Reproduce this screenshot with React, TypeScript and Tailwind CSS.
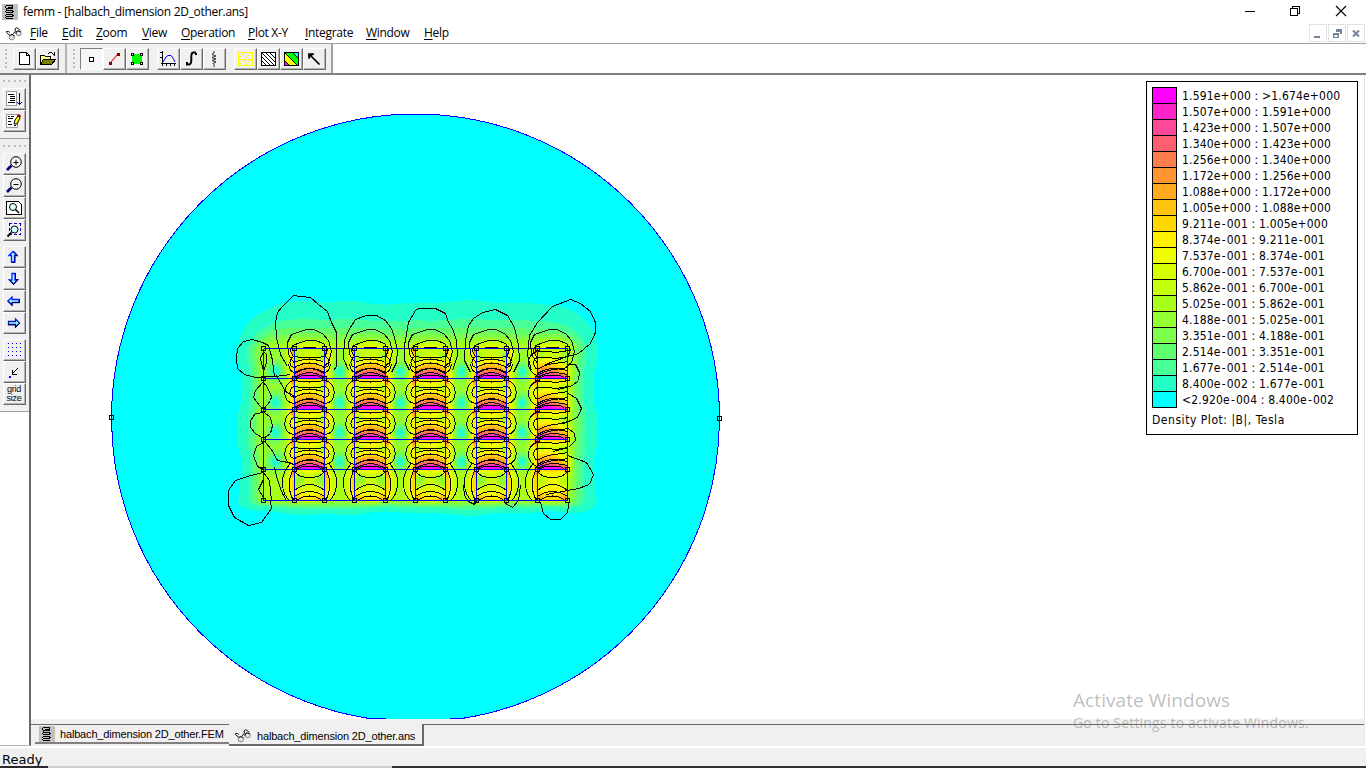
import React from 'react';

const LEVELS = [
  '#00ffff', '#24ffc8', '#48ff98', '#60ff70', '#7cff4c', '#94ff30', '#a8ff1c', '#c4ff0c', '#d8ff00', '#f0ff00',
  '#fff000', '#ffd800', '#ffc410', '#ffa820', '#ff9430', '#ff7c4c', '#ff6070', '#ff4898', '#ff24c8', '#ff00ff',
];

const LEGEND = [
  '1.591e+000 : >1.674e+000', '1.507e+000 : 1.591e+000', '1.423e+000 : 1.507e+000', '1.340e+000 : 1.423e+000',
  '1.256e+000 : 1.340e+000', '1.172e+000 : 1.256e+000', '1.088e+000 : 1.172e+000', '1.005e+000 : 1.088e+000',
  '9.211e-001 : 1.005e+000', '8.374e-001 : 9.211e-001', '7.537e-001 : 8.374e-001', '6.700e-001 : 7.537e-001',
  '5.862e-001 : 6.700e-001', '5.025e-001 : 5.862e-001', '4.188e-001 : 5.025e-001', '3.351e-001 : 4.188e-001',
  '2.514e-001 : 3.351e-001', '1.677e-001 : 2.514e-001', '8.400e-002 : 1.677e-001', '<2.920e-004 : 8.400e-002',
];

const XS = [263, 294, 324, 354, 385, 415, 445, 476, 506, 537, 567];
const YS = [348, 378, 409, 439, 469, 500];
const MAGNETS = [309, 370, 430, 491, 552];

const clamp = (v: number, a: number, b: number) => Math.max(a, Math.min(b, v));
const bump = (dx: number, dy: number, rx: number, ry: number) => Math.exp(-((dx / rx) ** 2) - (dy / ry) ** 2);

/** Flux density band (0..19) at a point of the plot. */
function level(x: number, y: number) {
  const wob = 2 * Math.sin(y / 13) + Math.sin(y / 5) * 0.7;
  const inset = 24 * clamp((348 - y) / 28, 0, 1) + 8 * clamp((y - 496) / 10, 0, 1);
  const left = 263 + inset;
  const right = 567 - inset;
  const ox = x < left ? (left - x) / (24 + wob + inset) : x > right ? (x - right) / (28 + wob + inset) : 0;
  const wave = Math.sin(x / 9) * 0.8 + 1.5 * Math.sin(x / 23);
  const oy = y < 348 ? (348 - y) / (46 + wave) : y > 500 ? (y - 500) / (13 + wave) : 0;
  const u = Math.hypot(ox, oy);
  if (u > 0 && (x < 263 || x > 567 || y < 348 || y > 500)) {
    if (u >= 1) return 0;
    let l = 1 + 5.6 * (1 - u) ** 1.8;
    for (const m of MAGNETS) if (y < 348) l += 3.4 * bump(x - m, y - 350, 20, 11);
    for (const m of MAGNETS) if (y > 500) l += 3 * bump(x - m, y - 499, 15, 4);
    if (x > 567) for (const m of [372, 402, 433, 463]) l += 3 * bump(x - 566, y - m, 7, 11);
    return l;
  }
  const row = clamp(YS.findIndex((v) => v > y) - 1, 0, 4);
  const y0 = YS[row];
  const v = (y - y0) / (YS[row + 1] - y0);
  const cx = MAGNETS.reduce((a, b) => (Math.abs(b - x) < Math.abs(a - x) ? b : a));
  const t = (x - cx) / 15.3;
  let l: number;
  if (Math.abs(t) <= 1) {
    if (row < 4) {
      const skew = cx === 552 ? 0.16 * (t + 0.3) : 0;
      const w = v - 0.14 * t * t - skew;
      l = 7.8 + 12.6 * clamp((w - 0.16) / 0.84, 0, 1) ** 1.35;
      l += 3 * bump(Math.abs(t) - 0.7, v - 1, 0.6, 0.14);
      if (row > 0) l += 3.5 * bump(0, v, 1, 0.2);
      l -= 2.2 * bump(Math.abs(t) - 0.85, v - 0.25, 0.25, 0.22);
    } else {
      l = 7.2 + 4.2 * v * v + 3 * bump(0, v, 1, 0.15) - 2.8 * bump(Math.abs(t) - 0.75, v - 0.35, 0.35, 0.28);
      l += 3 * bump(Math.abs(t) - 1, v - 1, 0.4, 0.3);
      if (cx === 552) l += 2 * (1 - Math.abs(v - 0.3));
    }
  } else {
    const side = Math.abs(t) - 1;
    l = 5.7 + 4.9 * Math.exp(-((side / 0.48) ** 2));
    if (row === 4) l = 6.4 + 5.4 * Math.exp(-((side / 0.5) ** 2)) * Math.abs(Math.sin(v * 3.1)) ** 0.5;
    if (x < 294) l -= 0.3;
    for (const yy of [371, 402, 432, 461]) {
      for (const xx of [275, 339, 400, 461, 522]) l -= 4.6 * bump(x - xx, y - yy, 7, 8);
    }
  }
  for (const yy of YS.slice(0, 5)) {
    const d = Math.abs(Math.abs(x - cx) - 16);
    l += (yy === 348 ? 3.2 : 5.5) * bump(d, y - yy - 2, 3, 5);
  }
  return clamp(l, 1, 19.5);
}

/** Runs of equal bands, one path for each colour. */
const BANDS: string[] = (() => {
  const out = LEVELS.map(() => '');
  for (let y = 298; y < 518; y++) {
    let start = 232;
    let cur = Math.floor(level(start, y));
    for (let x = 233; x <= 602; x++) {
      const n = x === 602 ? -1 : Math.floor(level(x, y));
      if (n !== cur) {
        if (cur > 0) out[cur] += `M${start} ${y}h${x - start}v1h${start - x}z`;
        start = x;
        cur = n;
      }
    }
  }
  return out;
})();

function fluxLoops() {
  const d: string[] = [];
  MAGNETS.forEach((cx) => {
    const last = cx === 552;
    const l = cx - 15;
    const r = cx + 15;
    for (let i = 0; i < 4; i++) {
      const y = YS[i];
      const sets = [[27, 0, 24], [20, 6, 18]];
      sets.forEach(([b, a, e], k) => {
        if (last) {
          d.push(`M${r} ${y + a + 2}C${cx + 5} ${y + a + 6} ${cx - 4} ${y + a + 2} ${l} ${y + a + 3}C${cx - b} ${y + a + 5} ${cx - b} ${y + e} ${l} ${y + e + 3}C${cx - 3} ${y + e - 5} ${cx + 4} ${y + e - 2} ${r} ${y + e - 5}`);
        } else if (i === 0 && k === 0) {
          d.push(`M${cx - 21} ${y + 16}Q${l - 4} ${y + e} ${l} ${y + e}Q${cx} ${y + e - 8} ${r} ${y + e}Q${r + 4} ${y + e} ${cx + 21} ${y + 16}`);
        } else {
          d.push(`M${l} ${y + a + 2}Q${cx} ${y + a + 5} ${r} ${y + a + 2}C${cx + b} ${y + a + 3} ${cx + b + 2} ${y + e} ${r} ${y + e + 1}Q${cx} ${y + e - 8} ${l} ${y + e + 1}C${cx - b - 2} ${y + e} ${cx - b} ${y + a + 3} ${l} ${y + a + 2}`);
        }
      });
      if (!last) d.push(`M${l + 1} ${y + 13}Q${cx} ${y + 9} ${r - 1} ${y + 13}`);
      [25, 29].forEach((e) => d.push(`M${l} ${y + e}Q${cx - 6} ${y + e - 5} ${cx} ${y + e - 5}Q${cx + 6} ${y + e - 5} ${r} ${y + e - (last ? 3 : 0)}`));
      d.push(`M${l + 3} ${y + 29}l5 -2h14l5 2`);
    }
    d.push(`M${l} 471q4 6 15 6q11 0 15 -6M${l} 490Q${cx} 478 ${r} 490M${l} 496Q${cx} 486 ${r} 496M${l + 3} 499Q${cx} 492 ${r - 3} 499`);
    d.push(`M${l - 2} 470Q${l - 9} 486 ${l - 1} 500`);
    if (!last) d.push(`M${r + 2} 470Q${r + 9} 486 ${r + 1} 500`);
    if (!last) d.push(`M${r + 4} 463Q${r + 13} 472 ${r + 12} 485Q${r + 11} 495 ${r + 5} 500`);
    d.push(`M${l - 4} 463Q${l - 13} 472 ${l - 12} 485Q${l - 11} 495 ${l - 5} 500`);
    d.push(`M${cx - 15} 363L${cx - 21} 354L${cx - 22} 342L${cx - 18} 334L${cx - 9} 331L${cx - 3} 329H${cx + 4}L${cx + 13} 333L${cx + 19} 340L${cx + 22} 351L${cx + 19} 362L${cx + 14} 366`);
    d.push(`M${l - 1} 357L${l - 4} 350L${l - 2} 345L${cx - 9} 342L${cx - 3} 340H${cx + 6}L${cx + 14} 343L${r + 3} 349L${r} 357`);
    d.push(`M${cx - 7} 347H${cx + 6}`);
  });
  return d.join('');
}

const OUTER =
  'M287 366L280 354L276 337L275 322L277 312L282 306L293 295L300 296L310 297L318 304L327 311L331 322L336 332V366L333 370' +
  'M274 376L272 360L270 352L268 345L262 342L252 339L243 341L237 348L236 358L237 368L244 374L255 377L275 376L290 374' +
  'M348 370L343 358L344 340L348 330L355 319L366 315H376L385 320L391 328L394 337L397 350L396 362L391 372' +
  'M409 370L404 360V345L408 322L415 310L418 308H435L445 313L448 322L452 328L456 340L457 355L452 370' +
  'M470 372L464 360L465 340L468 325L473 318L482 312L495 309L507 315L514 327L518 345L519 360L513 372' +
  'M531 370L527 355L529 335L537 322L552 306L570 299L580 303L590 311L595 322V332L590 343L578 353L567 356L545 364' +
  'M567 364H575L579 372L578 380L572 385L558 389M568 393L576 398L581 408L577 417L568 421L555 424M568 428L574 433L575 440L568 447L553 451M567 455L586 462L593 474L589 484L578 488L567 490L546 494' +
  'M540 502L543 513L550 519H560L567 512L569 500M463 485L464 495L468 501L474 504L476 500M505 503L512 507L518 500L520 485' +
  'M262 382L255 390L253 397L259 405L263 409L270 400L271 396L266 385ZM264 412L255 413L250 420V427L255 433L263 438L270 433L272 425L270 417ZM263 442L256 446L253 455L257 466L263 469M265 442L271 449L277 460L293 463M263 351L260 358L263 371L266 362V354Z' +
  'M270 500L271 508L261 522L248 525L234 517L228 505V490L235 480L250 475L263 472L269 480L271 500M263 479L258 489L263 497M276 375L285 391L294 396M274 467Q279 490 286 500';

function FieldPlot() {
  return (
    <svg className="block h-[644px] w-[1333px]" viewBox="31 75 1333 644" shapeRendering="crispEdges">
      <circle cx="415.5" cy="418" r="304" fill="#00ffff" stroke="#0000ff" />
      {BANDS.map((d, i) => (
        <path key={i} d={d} fill={LEVELS[i]} />
      ))}
      <g transform="translate(.5 .5)" fill="none">
        <path stroke="#0000ff" d={`${YS.map((y) => `M263 ${y}H567`).join('')}${XS.map((x) => `M${x} 348V500`).join('')}`} />
        <path stroke="#000" d={fluxLoops() + OUTER} />
        <path stroke="#0000ff" d={`M263 378H567${XS.map((x) => `M${x} 348V500`).join('')}`} />
        {YS.map((y) => XS.map((x) => <rect key={`${x}-${y}`} x={x - 2} y={y - 2} width="4" height="4" stroke="#000" />))}
        <rect x="109" y="415" width="4" height="4" stroke="#000" />
        <rect x="717" y="416" width="4" height="4" stroke="#000" />
      </g>
      <path d="M372 718.5H386M450 718.5H463" stroke="#0000ff" />
    </svg>
  );
}

function Spring() {
  return (
    <svg viewBox="0 0 16 16" className="h-4 w-4 shrink-0" shapeRendering="crispEdges">
      <rect width="16" height="16" fill="#c0c0c0" />
      <path
        d="M4 1h7v1H4zM3 2h1v2H3zM4 4h7v1H4zM10 2h1v2h-1zM6 3h4v1H6zM4 6h7v1H4zM3 7h1v1H3zM4 8h7v1H4zM10 7h2v1h-2zM4 10h7v1H4zM3 11h1v1H3zM4 12h7v1H4zM10 11h2v1h-2zM4 14h7v1H4zM3 13h1v1H3zM4 5h1v1H4z"
        fill="#000"
      />
    </svg>
  );
}

function Glasses() {
  return (
    <svg viewBox="0 0 16 14" className="h-[14px] w-4 shrink-0" fill="none" stroke="#111">
      <path d="M4 8.500L.5 5.500V4.500H2.500L4 5.500M14 3.500L12.500 1.500L10.500 .8L9 2L9.500 4L6.500 7.500" />
      <circle cx="5.800" cy="10.200" r="2.700" fill="#e4e4e4" stroke="#888" />
      <circle cx="12.700" cy="6.300" r="2.500" fill="#e4e4e4" stroke="#888" />
      <path d="M3.500 8.500L6 7.500L8.500 9M10 7V5L12 3.800L15 5" />
    </svg>
  );
}

const ICONS: Record<string, React.ReactNode> = {
  new: <path d="M3.500 1.500h7l3 3v9h-10zM10.500 1.500v3h3" fill="#fff" stroke="#000" />,
  open: (
    <>
      <path d="M1.500 13V4.500h4l1 1h5v3" fill="#ffff80" stroke="#000" />
      <path d="M1.500 13.500l3-5h12l-4 5z" fill="#808000" stroke="#000" />
      <path d="M10 1.500h3M13 2.500h1M14 3.500h2M15.500 1v4M9 2.500h1" stroke="#000" />
    </>
  ),
  point: <rect x="6.500" y="6.500" width="4" height="4" fill="#fff" stroke="#000" />,
  line: (
    <>
      <path d="M4 12L12 3" stroke="#f00" strokeWidth="1.100" />
      <path d="M3 11h3v3H3zM11 2h3v3h-3z" fill="#800000" />
    </>
  ),
  area: (
    <>
      <path d="M3 3h10v10H3z" fill="#00ff00" />
      <path d="M2.500 2.500h2v2h-2zM11.500 2.500h2v2h-2zM2.500 11.500h2v2h-2zM11.500 11.500h2v2h-2z" fill="#fff" stroke="#000" />
    </>
  ),
  plot: (
    <>
      <path d="M2.500 0v15M1 12.500h15M0 1.500h3M0 6.500h3M6.500 12v3M10.500 12v3M14.500 12v3" stroke="#000" shapeRendering="crispEdges" />
      <path d="M3 11L6 6L8 4.500H11L13 7L15 11" fill="none" stroke="#00f" />
    </>
  ),
  integral: (
    <>
      <path d="M13 1.500H10.500Q8.500 1.500 8.300 5V10Q8 13.500 6 13.500H3" fill="none" stroke="#000" strokeWidth="1.900" />
      <path d="M12 2h2v2h-2zM3 11h2v2H3z" fill="#000" />
    </>
  ),
  coil: <path d="M8 0v2L6 3.500L10 5L6 6.500L10 8L6 9.500L10 11L7 12.500L8 13.500V16" fill="none" stroke="#000" strokeWidth=".8" />,
  mesh: (
    <>
      <path d="M1.500 1.500h14v13h-14zM8.500 1v14M1 8.500h15" fill="none" stroke="#ff0" />
      <path d="M1 8L8 1M8 15L15 8M8 8L15 1M1 15L8 8" stroke="#ff0" shapeRendering="auto" />
    </>
  ),
  hatch: (
    <>
      <path d="M1.500 1.500h14v13h-14z" fill="#fff" stroke="#000" />
      <path d="M1 5l10 10M1 9l6 6M1 1l14 14M5 1l10 10M9 1l6 6" stroke="#000" />
    </>
  ),
  density: (
    <>
      <path d="M1 1h15v14H1z" fill="#00ff00" />
      <path d="M1 1l14 14H6L1 9z" fill="#ff0" />
      <path d="M1 9l6 6H1z" fill="#f0f" />
      <path d="M9 1h7v7z" fill="#0ff" />
      <path d="M1.500 1.500h14v13h-14zM1 1l14 14M1 9l6 6M9 1l7 7" fill="none" stroke="#000" />
    </>
  ),
  vector: <path d="M3 3L13.500 13.500M3 7.500V3H8M3 3h3l-3 3z" fill="#000" stroke="#000" strokeWidth="1.700" />,
  output: (
    <>
      <path d="M.5 .5h10v14H.5z" fill="#fff" stroke="#999" />
      <path d="M2 3.500h6M4 5.500h5M4 7.500h5M4 9.500h5M2 11.500h7" stroke="#000" />
      <path d="M13.500 2v12M11.500 11v1M15.500 11v1M12 12.500h3" fill="none" stroke="#000080" />
    </>
  ),
  edit: (
    <>
      <path d="M.5 1.500h11v13H.5z" fill="#fff" stroke="#999" />
      <path d="M2 3.500h2M5 3.500h3M2 5.500h5M2 8.500h3M2 11.500h4M8 12.500h2" stroke="#000" />
      <path d="M8 11l1-4 3-4 2 2-3 6z" fill="#ff0" stroke="#000" />
      <path d="M11 2l2-1 2 2-1 2z" fill="#a00000" />
    </>
  ),
  zoomIn: (
    <>
      <path d="M1 14l4.500-4.500" stroke="#000080" strokeWidth="2.600" />
      <circle cx="10" cy="6" r="5.300" fill="#f4f4f4" stroke="#000" />
      <path d="M7.500 6.500h5M10 4v5" stroke="#000" />
    </>
  ),
  zoomOut: (
    <>
      <path d="M1 14l4.500-4.500" stroke="#000080" strokeWidth="2.600" />
      <circle cx="10" cy="6" r="5.300" fill="#f4f4f4" stroke="#000" />
      <path d="M7.500 6.500h5" stroke="#000" />
    </>
  ),
  page: (
    <>
      <path d="M.5 1.500h12l3 3v10H.5z" fill="#fff" stroke="#000" />
      <circle cx="7" cy="7" r="3.500" fill="#dff" stroke="#000" shapeRendering="auto" />
      <path d="M9 9l4 4" stroke="#000" strokeWidth="1.500" shapeRendering="auto" />
    </>
  ),
  region: (
    <>
      <path d="M3 1.500h12M3 12.500h12M3.500 1v12M14.500 1v12" stroke="#0000c0" strokeDasharray="3 2" />
      <circle cx="8.500" cy="7.500" r="3.500" fill="#cff" stroke="#000" shapeRendering="auto" />
      <path d="M1.500 14.500l4-4" stroke="#000" strokeWidth="2" shapeRendering="auto" />
    </>
  ),
  up: (
    <>
      <path d="M7 2.500L3 6.500H5.500V13h3V6.500H11z" fill="#aff" stroke="#0020ff" strokeWidth="1.300" />
      <path d="M7.500 2L11.500 6.500H9V13.500H5.500" fill="none" stroke="#000060" />
    </>
  ),
  down: (
    <>
      <path d="M7.500 13L3.500 9H6V2.500h3V9h2.500z" fill="#aff" stroke="#0020ff" strokeWidth="1.300" />
      <path d="M9.500 2V8.500H12L7.500 13.500L3 8.500" fill="none" stroke="#000040" />
    </>
  ),
  left: (
    <>
      <path d="M2 8l4-4V6.500H13v3H6V12z" fill="#aff" stroke="#0020ff" strokeWidth="1.300" />
      <path d="M13.500 6V9.500H6V12.500L1.500 8" fill="none" stroke="#000040" />
    </>
  ),
  right: (
    <>
      <path d="M13.500 8L9.500 4V6.500H2.500v3H9.500V12z" fill="#aff" stroke="#0020c0" strokeWidth="1.300" />
      <path d="M2 9.800H9.500V12.500L14 8" fill="none" stroke="#000040" />
    </>
  ),
  dots: (
    <g stroke="#00f" strokeDasharray="1 3">
      <path d="M2 1.500h14M2 5.500h14M2 9.500h14M2 13.500h14" />
    </g>
  ),
  snap: (
    <>
      <path d="M3 12h2v2H3z" fill="#00f" />
      <path d="M6 10l6-6M6.500 6v4.500H11" fill="none" stroke="#000" />
    </>
  ),
};

const SMOOTH = ['zoomIn', 'zoomOut', 'integral', 'coil', 'vector', 'line', 'plot', 'up', 'down', 'left', 'right', 'edit'];

function Tool({ icon, pressed }: { icon: string; pressed?: boolean }) {
  const edge = pressed
    ? 'border-t-[#808080] border-l-[#808080] border-b-white border-r-white bg-[#f6f6f6]'
    : 'border-t-white border-l-white border-b-[#696969] border-r-[#696969] bg-[#f0f0f0] shadow-[inset_-1px_-1px_0_#b4b4b4]';
  return (
    <button className={`flex h-[22px] w-[23px] shrink-0 items-center justify-center border pr-px ${edge}`}>
      {icon === 'grid' ? (
        <span className="flex flex-col font-['Liberation_Sans'] text-[9px] leading-[9px] tracking-[-0.2px] text-black">
          <span>grid</span>
          <span>size</span>
        </span>
      ) : (
        <svg viewBox="0 0 16 16" className="h-4 w-4 overflow-visible" shapeRendering={SMOOTH.includes(icon) ? 'auto' : 'crispEdges'}>
          {ICONS[icon]}
        </svg>
      )}
    </button>
  );
}

const GripV = () => (
  <div className="flex h-[22px] w-[3px] flex-col justify-around">
    {[0, 1, 2, 3, 4].map((i) => (
      <i key={i} className="h-[2px] w-[2px] bg-[#bdbdbd]" />
    ))}
  </div>
);
const GripH = () => (
  <div className="flex h-[2px] w-[23px] justify-between">
    {[0, 1, 2, 3, 4].map((i) => (
      <i key={i} className="h-[2px] w-[2px] bg-[#bdbdbd]" />
    ))}
  </div>
);

const MENU: [string, string][] = [
  ['File', 'w-[32px]'], ['Edit', 'w-[34px]'], ['Zoom', 'w-[46px]'], ['View', 'w-[39px]'], ['Operation', 'w-[67px]'],
  ['Plot X-Y', 'w-[57px]'], ['Integrate', 'w-[61px]'], ['Window', 'w-[58px]'], ['Help', 'w-[40px]'],
];

export default function App() {
  return (
    <div className="relative flex h-[768px] w-[1366px] flex-col overflow-hidden bg-white font-['Open_Sans',sans-serif] text-[12px] text-black">
      <header className="flex h-6 shrink-0 items-center pl-[2px]">
        <Spring />
        <span className="ml-[5px] whitespace-nowrap tracking-[-0.3px]">femm - [halbach_dimension 2D_other.ans]</span>
        <svg viewBox="0 0 110 12" className="mr-[15px] mb-[3px] ml-auto h-3 w-[110px]" fill="none" stroke="#000">
          <path d="M4 6.500h10M49.500 3.500h7v7h-7zM51.500 3V1.500h7v7H57" shapeRendering="crispEdges" />
          <path d="M95 1l10 10M105 1L95 11" strokeWidth="1.100" />
        </svg>
      </header>
      <nav className="flex h-[19px] shrink-0 items-center pl-[6px]">
        <Glasses />
        <div className="mb-px ml-2 flex tracking-[-0.3px]">
          {MENU.map(([m, w]) => (
            <span key={m} className={`whitespace-nowrap ${w}`}>
              <span className="underline underline-offset-2">{m[0]}</span>
              {m.slice(1)}
            </span>
          ))}
        </div>
        <div className="ml-auto flex gap-[1px] self-start pr-px">
          {['M4 11h6v2H4z', 'M4 8h6v5H4zM7 4h6v5h-2V7H7zM5.500 10v2h3v-2z', 'M5 5.500l6 6M11 5.500l-6 6'].map((p, i) => (
            <span key={i} className="flex h-[18px] w-[18px] items-center justify-center border border-[#e2e2e2]">
              <svg viewBox="0 0 16 16" className="h-4 w-4 shrink-0" fillRule="evenodd" fill={i === 2 ? 'none' : '#75859a'} stroke={i === 2 ? '#75859a' : 'none'} strokeWidth="2">
                <path d={p} />
              </svg>
            </span>
          ))}
        </div>
      </nav>
      <div className="flex h-[32px] shrink-0 border-t border-b-2 border-t-[#a0a0a0] border-b-[#808080] bg-white">
        <div className="flex h-full w-[333px] items-center border-r-2 border-[#a0a0a0] bg-[#f0f0f0] pl-[5px]">
          <GripV />
          <div className="ml-[5px] flex">
            <Tool icon="new" />
            <Tool icon="open" />
          </div>
          <div className="mr-[6px] ml-[6px] h-full w-[2px] bg-[#b4b4b4]" />
          <GripV />
          <div className="ml-[4px] flex">
            <Tool icon="point" pressed />
            <Tool icon="line" />
            <Tool icon="area" />
          </div>
          <div className="ml-2 flex">
            <Tool icon="plot" />
            <Tool icon="integral" />
            <Tool icon="coil" />
          </div>
          <div className="ml-2 flex">
            <Tool icon="mesh" />
            <Tool icon="hatch" />
            <Tool icon="density" />
            <Tool icon="vector" />
          </div>
        </div>
      </div>
      <div className="flex h-[671px] shrink-0">
        <aside className="w-[31px] shrink-0 border-r-2 border-b border-r-[#696969] border-b-[#b4b4b4]">
          <div className="flex h-[337px] flex-col border-b border-[#a0a0a0] bg-[#f0f0f0] pt-[5px] pl-[3px]">
            <GripH />
            <div className="mt-[6px]">
              <Tool icon="output" />
              <Tool icon="edit" />
            </div>
            <div className="-ml-[3px] mt-[6px] h-px shrink-0 bg-[#a0a0a0]" />
            <div className="mt-[6px]">
              <GripH />
            </div>
            <div className="mt-[6px]">
              <Tool icon="zoomIn" />
              <Tool icon="zoomOut" />
              <Tool icon="page" />
              <Tool icon="region" />
            </div>
            <div className="mt-[5px]">
              <Tool icon="up" />
              <Tool icon="down" />
              <Tool icon="left" />
              <Tool icon="right" />
            </div>
            <div className="mt-[5px]">
              <Tool icon="dots" />
              <Tool icon="snap" />
              <Tool icon="grid" />
            </div>
          </div>
        </aside>
        <main className="relative flex w-[1334px] shrink-0 flex-col border-r border-[#e3e3e3]">
          <FieldPlot />
          <div className="h-[6px] shrink-0 border-b border-[#696969] bg-[#f0f0f0]" />
          <div className="flex h-[21px] shrink-0 bg-[#f0f0f0] pl-[4px] font-['Liberation_Sans',sans-serif] text-[11px] tracking-[-0.17px]">
            <div className="flex h-[19px] w-[194px] items-center border-b-2 border-[#808080] bg-[#f3eef0] pt-px pl-[4px]">
              <Spring />
              <span className="ml-[5px] whitespace-nowrap">halbach_dimension 2D_other.FEM</span>
            </div>
            <div className="-mt-px flex h-[22px] w-[195px] items-center border-r-2 border-b-2 border-[#696969] bg-[#f0f0f0] pt-[4px] pl-[6px]">
              <Glasses />
              <span className="ml-[6px] whitespace-nowrap">halbach_dimension 2D_other.ans</span>
            </div>
          </div>
          <section className="absolute top-[6px] right-[6px] flex h-[354px] w-[212px] flex-col border border-black bg-white pt-[5px] pl-[5px] font-['DejaVu_Sans_Condensed','DejaVu_Sans',sans-serif] font-stretch-condensed">
            {LEGEND.map((t, i) => (
              <div key={t} className="flex h-4 items-center">
                <svg className="h-4 w-[25px] shrink-0 overflow-visible" shapeRendering="crispEdges">
                  <rect x=".5" y=".5" width="24" height="16" fill={LEVELS[19 - i]} stroke="#000" />
                </svg>
                <span className="mt-[2px] ml-[5px] whitespace-nowrap tracking-[0.18px]">
                  {t.split(/(-)/).map((part, k) => (part === '-' ? <span key={k} className="mx-[1.05px]">-</span> : part))}
                </span>
              </div>
            ))}
            <div className="mt-[5px] leading-4 tracking-[0.54px] whitespace-nowrap">Density Plot: |B|, Tesla</div>
          </section>
        </main>
      </div>
      <footer className="flex h-[20px] shrink-0 items-center border-t-2 border-white bg-[#f0f0f0] pt-[5px] pl-[2px] font-['DejaVu_Sans',sans-serif] text-[13px]">
        Ready
      </footer>
      <div className="flex h-[2px] shrink-0">
        <i className="w-12 bg-[#2b2a2e]" />
        <i className="w-[344px] bg-[#d0d0d0]" />
        <i className="grow bg-[#2f3035]" />
      </div>
      <div className="absolute top-[687px] left-[1073px] whitespace-nowrap text-[#6d6d6d]/45">
        <p className="text-[19px] leading-[26px] tracking-[0.08px]">Activate Windows</p>
        <p className="text-[14px] leading-[19px] tracking-[0.18px]">Go to Settings to activate Windows.</p>
      </div>
    </div>
  );
}
